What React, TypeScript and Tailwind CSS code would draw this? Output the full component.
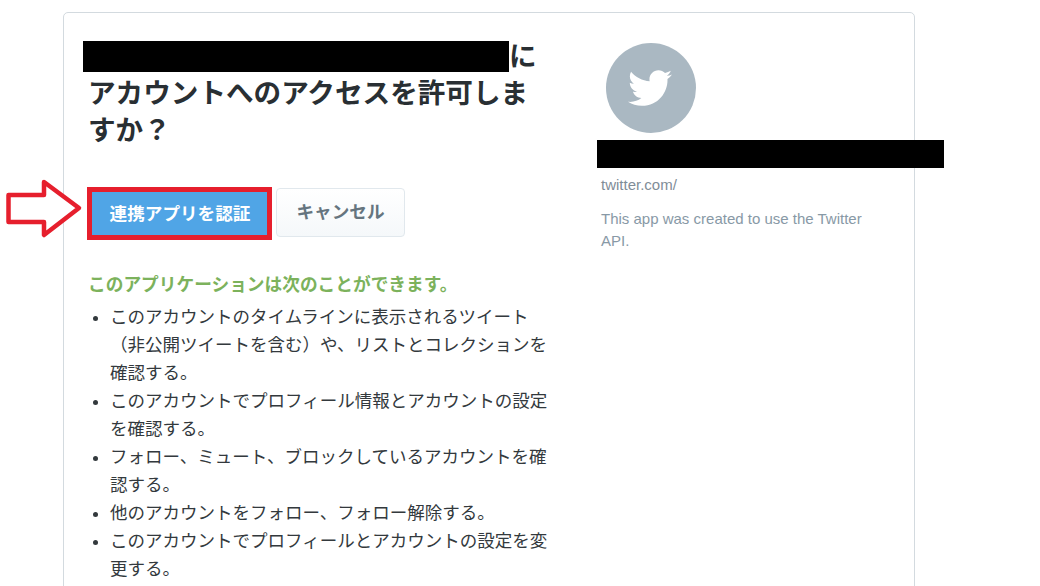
import React from 'react';
import { FaTwitter } from 'react-icons/fa';

const permissions = [
  'このアカウントのタイムラインに表示されるツイート（非公開ツイートを含む）や、リストとコレクションを確認する。',
  'このアカウントでプロフィール情報とアカウントの設定を確認する。',
  'フォロー、ミュート、ブロックしているアカウントを確認する。',
  '他のアカウントをフォロー、フォロー解除する。',
  'このアカウントでプロフィールとアカウントの設定を変更する。',
];

export default function App() {
  return (
    <div className="relative h-[586px] w-[1040px] overflow-hidden bg-white font-['Liberation_Sans','Noto_Sans_CJK_JP',sans-serif]">
      {/* CARD */}
      <div className="ml-[63px] mt-3 flex h-[640px] w-[852px] rounded-t-[5px] border border-[#d3dadf] bg-white">
        {/* Left column */}
        <div className="w-[510px] shrink-0 pl-[24px] pt-[25px]">
          <h1 className="w-[470px] text-[27.6px] leading-[37px] font-bold text-[#292f33]">
            <span className="-ml-[5px] inline-block h-[31px] w-[426px] bg-black align-[-6px]" />
            に<br />
            アカウントへのアクセスを許可しま<br />
            すか？
          </h1>

          <div className="relative mt-[43px] flex items-start">
            <button className="ml-[4px] h-[44px] w-[176px] bg-[#50a5e6] text-[17.6px] leading-[44px] font-bold text-white">
              連携アプリを認証
            </button>
            <button className="ml-[8px] -mt-[4px] h-[49px] w-[129px] rounded-[4px] border border-[#e1e8ed] bg-gradient-to-b from-white to-[#f5f8fa] text-[17.6px] font-bold text-[#66757f]">
              キャンセル
            </button>
            <div className="absolute -top-[5px] -left-[1px] h-[53px] w-[185px] border-[5px] border-[#e61f2d]" />
          </div>

          <h2 className="mt-[34px] text-[17.7px] leading-[28px] font-bold text-[#7cb25c]">
            このアプリケーションは次のことができます。
          </h2>
          <ul className="mt-[4px] w-[460px] list-disc pl-[22px] text-[17.5px] leading-[28px] text-[#33393d]">
            {permissions.map((text) => (
              <li key={text}>{text}</li>
            ))}
          </ul>
        </div>

        {/* Right column */}
        <div className="flex-1 pl-[27px] pt-[30px] text-[15px] leading-[22px] text-[#8899a6]">
          <div className="ml-[5px] flex h-[90px] w-[90px] items-center justify-center rounded-full bg-[#aab8c2]">
            <FaTwitter className="mr-[2px] text-white" size={44} />
          </div>
          <div className="h-[28px]" />
          <div className="mt-[13px]">
            <span className="text-[#7f8d98]">twitter.com/</span>
          </div>
          <p className="mt-[12px] w-[270px]">This app was created to use the Twitter API.</p>
        </div>
      </div>

      {/* redaction over the app name */}
      <div className="absolute top-[140px] left-[597px] h-[28px] w-[347px] bg-black" />

      {/* arrow pointing at the authorize button */}
      <svg className="absolute top-[178px] left-[5px]" width="80" height="64" viewBox="0 0 80 64">
        <path d="M3.5 17H39V4L74 30L39 57V44H3.5Z" fill="#fff" stroke="#e61f2d" strokeWidth="4.5" strokeLinejoin="round" />
      </svg>
    </div>
  );
}
